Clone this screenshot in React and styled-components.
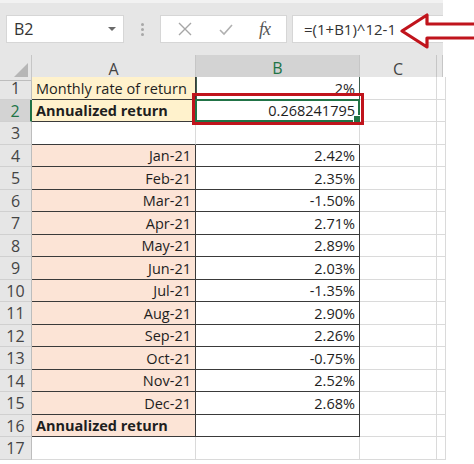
import React from "react";
import styled, { createGlobalStyle, css } from "styled-components";

const GlobalStyle = createGlobalStyle`
  html, body { margin: 0; padding: 0; background: #ffffff; }
  body { font-family: "Open Sans", "Liberation Sans", sans-serif; }
  * { box-sizing: border-box; }
`;

const Page = styled.div`
  position: relative;
  width: 474px;
  height: 464px;
  overflow: hidden;
  background: #ffffff;
`;

const Sheet = styled.div`
  width: 443px;
  display: flex;
  flex-direction: column;
`;

const Toolbar = styled.div`
  height: 55px;
  background: #e6e6e6;
  border-top: 3px solid #f2f2f2;
  display: flex;
  align-items: flex-start;
  padding: 12px 0 0 6px;
`;

const NameBox = styled.div`
  width: 118px;
  height: 28px;
  background: #ffffff;
  border: 1px solid #d6d6d6;
  display: flex;
  align-items: center;
  justify-content: space-between;
  padding: 0 7px 0 7px;
  font-size: 16px;
  color: #333;
`;

const Caret = styled.span`
  width: 0;
  height: 0;
  border-left: 4px solid transparent;
  border-right: 4px solid transparent;
  border-top: 4px solid #6a6a6a;
`;

const Grip = styled.div`
  width: 36px;
  height: 28px;
  display: flex;
  flex-direction: column;
  align-items: center;
  justify-content: center;
  gap: 2px;
`;

const GripDot = styled.span`
  width: 3px;
  height: 3px;
  border-radius: 50%;
  background: #a8a8a8;
`;

const FxBox = styled.div`
  width: 127px;
  height: 28px;
  background: #ffffff;
  border: 1px solid #d6d6d6;
  display: flex;
  align-items: center;
  justify-content: space-around;
  padding: 0 4px;
`;

const FxGlyph = styled.span`
  font-family: "Liberation Serif", serif;
  font-style: italic;
  font-size: 18px;
  color: #555;
  letter-spacing: -1px;
`;

const FormulaBox = styled.div`
  flex: 1;
  height: 28px;
  margin-left: 5px;
  background: #ffffff;
  border: 1px solid #d6d6d6;
  border-right: none;
  display: flex;
  align-items: center;
  padding-left: 11px;
  font-size: 15px;
  color: #333;
`;

const Row = styled.div`
  display: grid;
  grid-template-columns: 32px 164px 164px 77px 6px;
  height: ${(p) => p.$h || 22.5}px;
`;

const Corner = styled.div`
  position: relative;
  background: #e6e6e6;
  border-right: 1px solid #c6c6c6;
  border-bottom: 1px solid #bdbdbd;
  &::after {
    content: "";
    position: absolute;
    right: 3px;
    bottom: 3px;
    width: 0;
    height: 0;
    border-left: 14px solid transparent;
    border-bottom: 14px solid #b6b6b6;
  }
`;

const ColHead = styled.div`
  background: ${(p) => (p.$active ? "#d3d3d3" : "#e6e6e6")};
  color: ${(p) => (p.$active ? "#217346" : "#444")};
  border-right: 1px solid #c6c6c6;
  border-bottom: ${(p) => (p.$active ? "2px solid #217346" : "1px solid #bdbdbd")};
  display: flex;
  align-items: center;
  justify-content: center;
  font-size: 16px;
  padding-top: 2px;
`;

const RowHead = styled.div`
  background: ${(p) => (p.$active ? "#d3d3d3" : "#e6e6e6")};
  color: ${(p) => (p.$active ? "#217346" : "#444")};
  border-right: ${(p) => (p.$active ? "2px solid #217346" : "1px solid #bdbdbd")};
  border-bottom: 1px solid #d0d0d0;
  display: flex;
  align-items: center;
  justify-content: center;
  padding-top: 1px;
  font-size: 16px;
  line-height: 18px;
`;

const fills = {
  yellow: "#fff2cc",
  peach: "#fce4d6",
  none: "#ffffff",
};

const Cell = styled.div`
  position: relative;
  background: ${(p) => fills[p.$fill || "none"]};
  border-right: 1px solid ${(p) => (p.$boxR ? "#3a3a3a" : "#dadada")};
  border-bottom: 1px solid ${(p) => (p.$boxB ? "#3a3a3a" : "#dadada")};
  display: flex;
  align-items: flex-end;
  justify-content: ${(p) => (p.$right ? "flex-end" : "flex-start")};
  padding: 0 4px 1px 4px;
  font-size: 14.5px;
  line-height: 19px;
  font-weight: ${(p) => (p.$bold ? 700 : 400)};
  color: #1e1e1e;
  white-space: nowrap;
  ${(p) =>
    p.$greenSides &&
    css`
      border-right-color: #3e5f4f;
      box-shadow: inset 1px 0 0 #3e5f4f;
    `}
`;

const Selection = styled.div`
  position: absolute;
  left: -1px;
  top: -1px;
  right: -1px;
  bottom: -1px;
  border: 2px solid #217346;
  pointer-events: none;
  &::after {
    content: "";
    position: absolute;
    right: -3px;
    bottom: -3px;
    width: 6px;
    height: 6px;
    background: #217346;
    border: 1px solid #ffffff;
  }
`;

const SelText = styled.span`
  position: relative;
  z-index: 1;
`;

const RedBox = styled.div`
  position: absolute;
  left: 192px;
  top: 93px;
  width: 172px;
  height: 32px;
  border: 3px solid #c0141c;
  pointer-events: none;
`;

const ArrowWrap = styled.svg`
  position: absolute;
  left: 398px;
  top: 12px;
  width: 80px;
  height: 38px;
  pointer-events: none;
`;

const months = [
  ["Jan-21", "2.42%"],
  ["Feb-21", "2.35%"],
  ["Mar-21", "-1.50%"],
  ["Apr-21", "2.71%"],
  ["May-21", "2.89%"],
  ["Jun-21", "2.03%"],
  ["Jul-21", "-1.35%"],
  ["Aug-21", "2.90%"],
  ["Sep-21", "2.26%"],
  ["Oct-21", "-0.75%"],
  ["Nov-21", "2.52%"],
  ["Dec-21", "2.68%"],
];

function Blank() {
  return (
    <>
      <Cell />
      <Cell />
    </>
  );
}

export default function App() {
  return (
    <Page>
      <GlobalStyle />
      <Sheet>
        <Toolbar>
          <NameBox>
            <span>B2</span>
            <Caret />
          </NameBox>
          <Grip>
            <GripDot />
            <GripDot />
            <GripDot />
          </Grip>
          <FxBox>
            <svg width="16" height="16" viewBox="0 0 16 16">
              <path d="M2 2 L14 14 M14 2 L2 14" stroke="#a6a6a6" strokeWidth="1.4" fill="none" />
            </svg>
            <svg width="18" height="16" viewBox="0 0 18 16">
              <path d="M3 9 L7 13 L15 4" stroke="#b0b0b0" strokeWidth="1.6" fill="none" />
            </svg>
            <FxGlyph>fx</FxGlyph>
          </FxBox>
          <FormulaBox>=(1+B1)^12-1</FormulaBox>
        </Toolbar>

        <Row $h={22}>
          <Corner />
          <ColHead>A</ColHead>
          <ColHead $active>B</ColHead>
          <ColHead>C</ColHead>
          <ColHead />
        </Row>

        <Row>
          <RowHead>1</RowHead>
          <Cell $fill="yellow" $boxR $boxB>Monthly rate of return</Cell>
          <Cell $right $greenSides>2%</Cell>
          <Blank />
        </Row>

        <Row>
          <RowHead $active>2</RowHead>
          <Cell $fill="yellow" $bold $boxR $boxB>Annualized return</Cell>
          <Cell $right $boxB>
            <SelText>0.268241795</SelText>
            <Selection />
          </Cell>
          <Blank />
        </Row>

        <Row>
          <RowHead>3</RowHead>
          <Cell $boxB />
          <Cell $boxB />
          <Blank />
        </Row>

        {months.map(([m, v], i) => (
          <Row key={m}>
            <RowHead>{i + 4}</RowHead>
            <Cell $fill="peach" $right $boxR $boxB>{m}</Cell>
            <Cell $right $boxR $boxB>{v}</Cell>
            <Blank />
          </Row>
        ))}

        <Row>
          <RowHead>16</RowHead>
          <Cell $fill="peach" $bold $boxR $boxB>Annualized return</Cell>
          <Cell $boxR $boxB />
          <Blank />
        </Row>

        <Row>
          <RowHead>17</RowHead>
          <Cell />
          <Cell />
          <Blank />
        </Row>
      </Sheet>

      <RedBox />
      <ArrowWrap viewBox="0 0 80 38">
        <path
          d="M4 19 L29 3 L29 12 L82 12 L82 26 L29 26 L29 35 Z"
          fill="#ffffff"
          stroke="#c0141c"
          strokeWidth="3.2"
          strokeLinejoin="round"
        />
      </ArrowWrap>
    </Page>
  );
}
